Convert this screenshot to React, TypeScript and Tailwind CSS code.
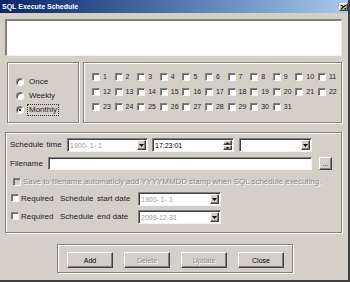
import React from "react";

const sunken =
  "bg-white border border-t-[#808080] border-l-[#808080] border-r-[#f4f4f4] border-b-[#f4f4f4] shadow-[inset_1px_1px_0_#404040]";
const raised =
  "bg-[#d4d0c8] border border-t-white border-l-white border-r-[#404040] border-b-[#404040] shadow-[inset_-1px_-1px_0_#808080]";
const etched =
  "border border-[#808080] shadow-[inset_1px_1px_0_#fff,1px_1px_0_#fff]";
const disabledText = "text-[#8a8a8a] [text-shadow:1px_1px_0_#fff]";

function Check({ disabled = false }: { disabled?: boolean }) {
  return (
    <span
      className={`inline-block w-[8px] h-[8px] shrink-0 border border-t-[#808080] border-l-[#808080] border-r-[#f4f4f4] border-b-[#f4f4f4] shadow-[inset_1px_1px_0_#6a6a6a] ${
        disabled ? "bg-[#d4d0c8]" : "bg-white"
      }`}
    />
  );
}

function Radio({ checked = false }: { checked?: boolean }) {
  return (
    <span className="relative inline-block w-[8px] h-[8px] shrink-0 rounded-full bg-white border border-t-[#808080] border-l-[#808080] border-r-white border-b-white shadow-[inset_1px_1px_0_#404040]">
      {checked && (
        <span className="absolute left-[2px] top-[2px] w-[2px] h-[2px] rounded-full bg-black" />
      )}
    </span>
  );
}

function DropBtn() {
  return (
    <span className={`w-[9px] h-full shrink-0 flex items-center justify-center ${raised}`}>
      <svg width="5" height="3" viewBox="0 0 5 3">
        <path d="M0 0h5L2.5 3z" fill="#000" />
      </svg>
    </span>
  );
}

function Combo({ value, w, gray = false }: { value: string; w: string; gray?: boolean }) {
  return (
    <div className={`${w} h-[14px] flex items-center ${sunken} p-[1px] pl-[2px]`}>
      <span className={`flex-1 text-[7px] ${gray ? "text-[#9a9a9a]" : "text-black"}`}>
        {value}
      </span>
      <DropBtn />
    </div>
  );
}

function Button({ label, disabled = false }: { label: string; disabled?: boolean }) {
  return (
    <div
      className={`w-[46px] h-[16px] flex items-center justify-center text-[7px] ${raised} ${
        disabled ? disabledText : "text-black"
      }`}
    >
      {label}
    </div>
  );
}

const days = Array.from({ length: 31 }, (_, i) => i + 1);

export default function App() {
  return (
    <div className="w-[350px] h-[282px] bg-[#d4d0c8] border-r-2 border-b-2 border-r-[#404040] border-b-[#404040] flex flex-col overflow-hidden font-['Liberation_Sans',Arial,sans-serif] text-[8px] text-[#222] leading-none">
      {/* Title bar */}
      <div className="h-[13px] shrink-0 flex items-center justify-between bg-gradient-to-r from-[#0a246a] to-[#a6caf0] pl-[2px]">
        <span className="text-white font-bold text-[7px]">SQL Execute Schedule</span>
        <span className={`w-[9px] h-[8px] flex items-center justify-center ${raised}`}>
          <svg width="5" height="4" viewBox="0 0 5 4">
            <path d="M0 0l5 4M5 0l-5 4" stroke="#000" strokeWidth="1.2" />
          </svg>
        </span>
      </div>

      {/* Text area */}
      <div className="mt-[6px] ml-[5px] w-[337px] h-[37px] bg-white border-t-2 border-l-2 border-t-[#808080] border-l-[#808080] border-r border-b border-r-[#e8e8e8] border-b-[#f4f4f4]" />

      {/* Type + days */}
      <div className="mt-[6px] flex">
        <div className={`ml-[7px] w-[72px] h-[61px] ${etched} pl-[8px] pt-[12px] flex flex-col`}>
          <div className="h-[14px] flex items-center gap-[5px]">
            <Radio />
            <span>Once</span>
          </div>
          <div className="h-[14px] flex items-center gap-[5px]">
            <Radio />
            <span>Weekly</span>
          </div>
          <div className="h-[13px] flex items-center gap-[4px]">
            <Radio checked />
            <span className="outline outline-1 outline-dotted outline-[#333] px-[1px] py-[1px]">
              Monthly
            </span>
          </div>
        </div>
        <div className={`ml-[4px] w-[259px] h-[61px] ${etched} pl-[8px] pt-[6px]`}>
          <div className="grid grid-cols-[repeat(11,22.6px)] auto-rows-[15px]">
            {days.map((d) => (
              <div key={d} className="flex items-center gap-[3px]">
                <Check />
                <span className="text-[7px]">{d}</span>
              </div>
            ))}
          </div>
        </div>
      </div>

      {/* Schedule settings */}
      <div className={`mt-[9px] ml-[5px] w-[337px] h-[101px] ${etched} pl-[4px] pt-[5px] flex flex-col`}>
        <div className="h-[14px] flex items-center">
          <span className="w-[57px]">
            Schedule <span className="ml-[1px]">time</span>
          </span>
          <Combo value="1900- 1- 1" w="w-[81px]" gray />
          <div className={`ml-[4px] w-[82px] h-[14px] flex items-center ${sunken} p-[1px] pl-[2px]`}>
            <span className="flex-1 text-[7px] text-black">17:23:01</span>
            <span className="w-[9px] h-full flex flex-col">
              <span className={`flex-1 flex items-center justify-center ${raised}`}>
                <svg width="3" height="2" viewBox="0 0 3 2">
                  <path d="M0 2h3L1.5 0z" fill="#000" />
                </svg>
              </span>
              <span className={`flex-1 flex items-center justify-center ${raised}`}>
                <svg width="3" height="2" viewBox="0 0 3 2">
                  <path d="M0 0h3L1.5 2z" fill="#000" />
                </svg>
              </span>
            </span>
          </div>
          <div className="ml-[5px]">
            <Combo value="" w="w-[73px]" />
          </div>
        </div>

        <div className="mt-[5px] h-[13px] flex items-center">
          <span className="w-[38px]">Filename</span>
          <div className={`w-[264px] h-[13px] ${sunken}`} />
          <div className={`ml-[7px] w-[13px] h-[13px] flex items-end justify-center pb-[2px] text-[7px] ${raised}`}>
            ...
          </div>
        </div>

        <div className="mt-[6px] h-[12px] flex items-center pl-[3px] gap-[2px]">
          <Check disabled />
          <span className={`text-[7.9px] ${disabledText}`}>
            Save to filename automaticly add YYYYMMDD stamp when SQL schedule executing.
          </span>
        </div>

        <div className="mt-[4px] h-[14px] flex items-center">
          <span className="ml-[1px] w-[10px]">
            <Check />
          </span>
          <span className="w-[39px]">Required</span>
          <span className="w-[37px]">Schedule</span>
          <span className="w-[41px]">start date</span>
          <Combo value="1900- 1- 1" w="w-[83px]" gray />
        </div>

        <div className="mt-[4px] h-[14px] flex items-center">
          <span className="ml-[1px] w-[10px]">
            <Check />
          </span>
          <span className="w-[39px]">Required</span>
          <span className="w-[37px]">Schedule</span>
          <span className="w-[41px]">end date</span>
          <Combo value="2099-12-31" w="w-[83px]" gray />
        </div>
      </div>

      {/* Buttons */}
      <div className={`mt-[11px] ml-[57px] w-[236px] h-[29px] ${etched} pl-[9px] pt-[7px] flex gap-[11px]`}>
        <Button label="Add" />
        <Button label="Delete" disabled />
        <Button label="Update" disabled />
        <Button label="Close" />
      </div>
    </div>
  );
}
